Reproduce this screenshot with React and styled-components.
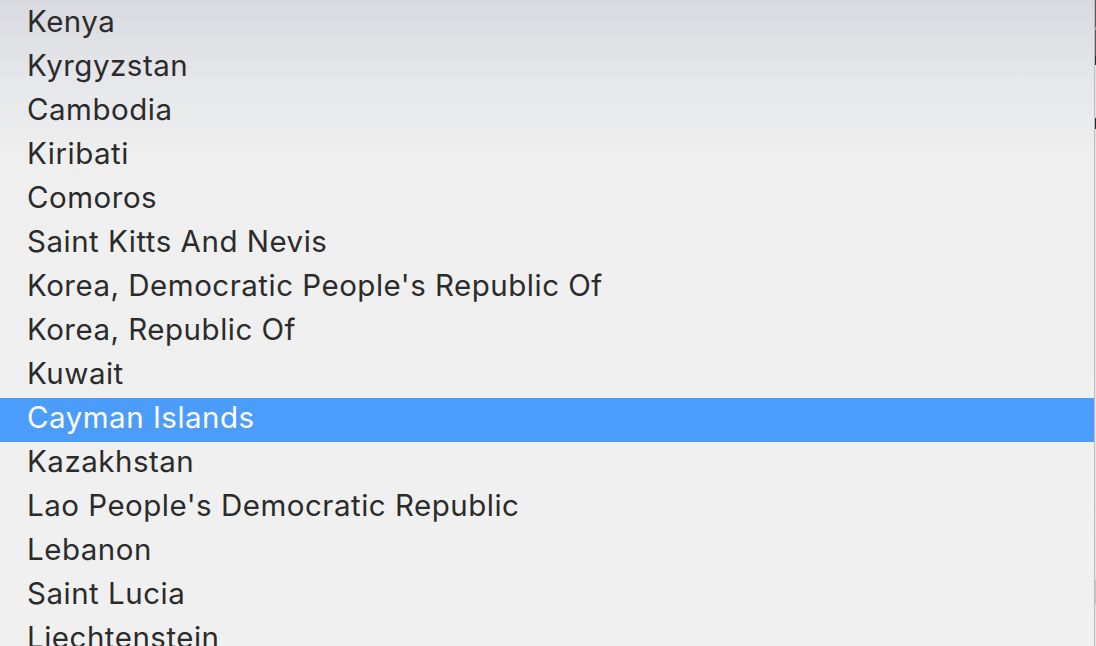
import React from 'react';
import styled, { createGlobalStyle } from 'styled-components';

const GlobalStyle = createGlobalStyle`
  html, body {
    margin: 0;
    padding: 0;
    overflow: hidden;
  }
`;

const countries = [
  'Kenya',
  'Kyrgyzstan',
  'Cambodia',
  'Kiribati',
  'Comoros',
  'Saint Kitts And Nevis',
  "Korea, Democratic People's Republic Of",
  'Korea, Republic Of',
  'Kuwait',
  'Cayman Islands',
  'Kazakhstan',
  "Lao People's Democratic Republic",
  'Lebanon',
  'Saint Lucia',
  'Liechtenstein',
];

const Screen = styled.div`
  display: flex;
  width: 1096px;
  height: 646px;
  overflow: hidden;
`;

const Menu = styled.ul`
  flex: 1;
  margin: 0;
  padding: 2px 0 0;
  list-style: none;
  background: linear-gradient(to bottom, #d9dadf 0px, #e6e7ea 80px, #efefef 160px, #f0f0f0 100%);
  border-right: 1px solid #bcbcbc;
`;

const Item = styled.li`
  height: 44px;
  box-sizing: border-box;
  display: flex;
  align-items: center;
  padding: 0 0 7px 27px;
  font-family: Inter, "Noto Sans", sans-serif;
  font-size: 29.5px;
  letter-spacing: 0.5px;
  color: ${({ selected }) => (selected ? '#ffffff' : '#2b2b2b')};
  background: ${({ selected }) => (selected ? '#4c9cfc' : 'transparent')};
  white-space: nowrap;
`;

const Edge = styled.div`
  width: 1px;
  background: linear-gradient(
    to bottom,
    #5a5a5e 0px,
    #5a5a5e 27px,
    #9a9a9e 27px,
    #9a9a9e 30px,
    #5a5a5e 30px,
    #5a5a5e 56px,
    #23283a 56px,
    #23283a 65px,
    #e2e2e4 65px,
    #e2e2e4 118px,
    #23283a 118px,
    #23283a 129px,
    #e6e6e6 129px,
    #e6e6e6 580px,
    #c8c8c8 580px,
    #c8c8c8 604px,
    #e6e6e6 604px
  );
`;

export default function App() {
  return (
    <Screen>
      <GlobalStyle />
      <Menu>
        {countries.map((name) => (
          <Item key={name} selected={name === 'Cayman Islands'}>
            {name}
          </Item>
        ))}
      </Menu>
      <Edge />
    </Screen>
  );
}
